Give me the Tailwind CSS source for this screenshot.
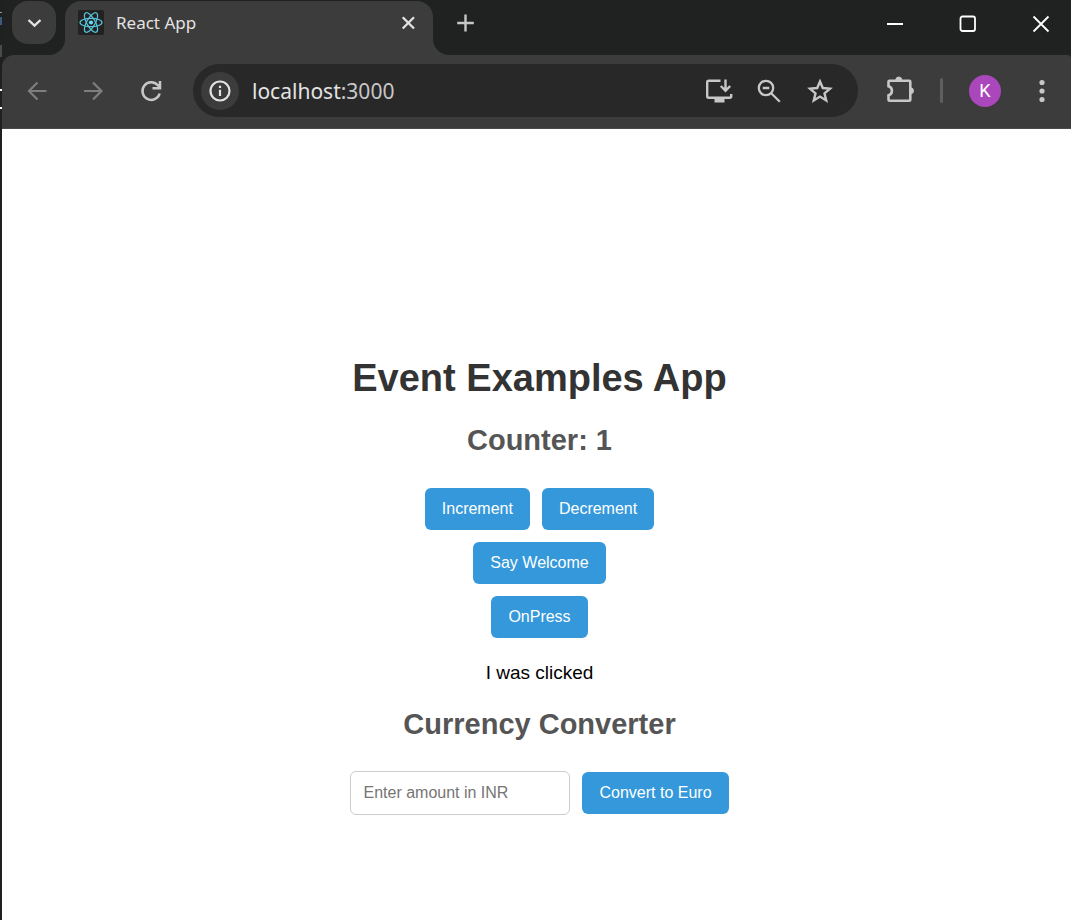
<!DOCTYPE html>
<html lang="en">
<head>
<meta charset="utf-8">
<meta name="viewport" content="width=device-width, initial-scale=1">
<title>React App</title>
<script src="https://cdn.jsdelivr.net/npm/@tailwindcss/browser@4"></script>
</head>
<body class="flex min-h-screen bg-[#202221] font-['Liberation_Sans',Arial,sans-serif]">
<div class="flex w-0.5 shrink-0 flex-col bg-[#202020]" aria-hidden="true">
  <span class="mt-3 h-px bg-[#999999]"></span>
  <span class="mt-1 h-2 bg-[#3c5a80]"></span>
  <span class="mt-5 h-3 bg-[#4a4a4a]"></span>
  <span class="mt-8 h-0.5 bg-white"></span>
  <span class="mt-4 h-0.5 bg-white"></span>
</div>
<div class="flex min-w-0 flex-1 flex-col">
  <header class="font-['Noto_Sans','Open_Sans',sans-serif]">
    <div class="flex h-[55px] items-start pl-2.5">
      <button type="button" aria-label="Search tabs" class="mt-px flex h-[43px] w-11 items-center justify-center rounded-2xl bg-[#3c3c3c]">
        <svg class="size-4" viewBox="0 0 16 16" fill="none" stroke="#e3e3e3" stroke-width="2.4"><path d="M2.500 5 8.500 10.700 14.500 5"/></svg>
      </button>
      <div class="relative mt-px ml-[9px] flex h-[54px] w-[368px] items-start rounded-t-2xl bg-[#3c3c3c] pt-[9px] pr-[17px] pl-[13px]">
        <svg class="absolute bottom-0 -left-4 size-4" viewBox="0 0 16 16" fill="#3c3c3c"><path d="M16 0v16H0A16 16 0 0 0 16 0z"/></svg>
        <svg class="absolute -right-4 bottom-0 size-4" viewBox="0 0 16 16" fill="#3c3c3c"><path d="M0 0v16h16A16 16 0 0 1 0 0z"/></svg>
        <svg class="size-[26px] shrink-0" viewBox="0 0 26 26"><rect width="26" height="25" rx="1.5" fill="#222222"/><g fill="none" stroke="#58c4dc" stroke-width="1.2"><ellipse cx="13" cy="12.5" rx="11" ry="4.2"/><ellipse cx="13" cy="12.5" rx="11" ry="4.2" transform="rotate(60 13 12.5)"/><ellipse cx="13" cy="12.5" rx="11" ry="4.2" transform="rotate(120 13 12.5)"/></g><circle cx="13" cy="12.5" r="2.1" fill="#61dafb"/></svg>
        <span class="ml-3 flex-1 text-[17px] leading-[26px] text-[#e3e3e3]">React App</span>
        <button type="button" aria-label="Close tab" class="mt-[5px] flex size-4 items-center justify-center">
          <svg class="size-4" viewBox="0 0 16 16" stroke="#e3e3e3" stroke-width="2.3"><path d="m2.700 2.200 11.300 11.300M14 2.200 2.700 13.500"/></svg>
        </button>
      </div>
      <button type="button" aria-label="New tab" class="mt-3 ml-[22px] flex size-5 items-center justify-center">
        <svg class="size-5" viewBox="0 0 20 20" stroke="#c7c7c7" stroke-width="2.4"><path d="M10.500 2.500v17M2.200 11h16.600"/></svg>
      </button>
      <div class="ml-auto flex gap-[13px]">
        <button type="button" aria-label="Minimize" class="flex h-12 w-[60px] items-center justify-center"><svg class="size-5" viewBox="0 0 20 20" stroke="#fff" stroke-width="2"><path d="M2 10h16"/></svg></button>
        <button type="button" aria-label="Maximize" class="flex h-12 w-[60px] items-center justify-center"><svg class="size-5" viewBox="0 0 20 20" fill="none" stroke="#fff" stroke-width="1.800"><rect x="2.500" y="2.500" width="14.500" height="14.500" rx="2"/></svg></button>
        <button type="button" aria-label="Close" class="flex h-12 w-[60px] items-center justify-center"><svg class="size-5" viewBox="0 0 20 20" stroke="#fff" stroke-width="1.800"><path d="m2.500 2.500 15 15M17.500 2.500l-15 15"/></svg></button>
      </div>
    </div>
    <div class="flex h-[74px] items-center rounded-tl-xl rounded-tr-sm border-b border-[#4a4a4a] bg-[#3c3c3c] pb-0.5 pl-[23px]">
      <button type="button" aria-label="Back" class="size-6"><svg class="size-6" viewBox="0 0 24 24" fill="none" stroke="#7e7e7e" stroke-width="2.200"><path d="M21.500 12H4M12.500 3.500 4 12l8.500 8.500"/></svg></button>
      <button type="button" aria-label="Forward" class="ml-8 size-6"><svg class="size-6" viewBox="0 0 24 24" fill="none" stroke="#7e7e7e" stroke-width="2.200"><path d="M3 12h17.500M12 3.500l8.500 8.500-8.500 8.500"/></svg></button>
      <button type="button" aria-label="Reload" class="ml-[34px] size-6"><svg class="size-6" viewBox="0 0 24 24" fill="none" stroke="#c7c7c7" stroke-width="2.500"><path d="M20.700 14.500a8.800 8.800 0 1 1-1.900-8.300L20.500 8M21 2v7.200h-7.500"/></svg></button>
      <div class="ml-[30px] flex h-[53px] flex-1 items-center rounded-full bg-[#282828] pr-6 pl-2">
        <button type="button" aria-label="View site information" class="flex size-[38px] shrink-0 items-center justify-center rounded-full bg-[#3c3c3c]"><svg class="size-6" viewBox="0 0 24 24" fill="none" stroke="#e3e3e3" stroke-width="2.200"><circle cx="12" cy="12" r="9.500"/><path d="M12 10.700v6.300M12 6.800v2.300"/></svg></button>
        <div class="ml-[13px] flex-1 text-[21px] leading-7 text-[#c7c7c7]"><span class="text-[#e3e3e3]">localhost</span>:3000</div>
        <button type="button" aria-label="Install app" class="size-7"><svg class="size-7" viewBox="0 0 28 28" fill="none" stroke="#c7c7c7" stroke-width="2.400"><path d="M15.500 3.700H3.700a1.500 1.500 0 0 0-1.500 1.500v14a1.500 1.500 0 0 0 1.500 1.500h21a1.500 1.500 0 0 0 1.500-1.500V17M20.500 2.500v11M15.800 9l4.700 4.700L25.200 9"/><path d="M9.500 23.500h10" stroke-width="4"/></svg></button>
        <button type="button" aria-label="Zoom" class="ml-[22px] size-7"><svg class="size-7" viewBox="0 0 28 28" fill="none" stroke="#c7c7c7" stroke-width="2.300"><circle cx="11" cy="11" r="7.200"/><path d="m16.200 16.200 8.600 8.600M7.700 11h6.600"/></svg></button>
        <button type="button" aria-label="Bookmark this tab" class="ml-[23px] size-7"><svg class="size-7" viewBox="0 0 28 28" fill="none" stroke="#c7c7c7" stroke-width="2.400"><path d="m14 4.500 2.800 6.500 7.200.6-5.500 4.800 1.700 7-6.200-3.800-6.200 3.800 1.700-7L4 11.600l7.200-.6z"/></svg></button>
      </div>
      <button type="button" aria-label="Extensions" class="ml-7 size-7"><svg class="size-7 overflow-visible" viewBox="0 0 28 28" fill="none" stroke="#c7c7c7" stroke-width="2.600"><path d="M3.500 3.800h19.800a1 1 0 0 1 1 1v18a1 1 0 0 1-1 1H3.500a1 1 0 0 1-1-1v-4.600c4.600-1.300 4.600-7.700 0-9V4.800a1 1 0 0 1 1-1z"/><path d="M9.800 3a3 3 0 0 1 6 0zM24.500 10.800a3 3 0 0 1 0 6z" fill="#c7c7c7" stroke-width="1"/></svg></button>
      <span class="ml-[26px] h-[25px] w-[3px] rounded-full bg-[#5f5f5f]"></span>
      <button type="button" aria-label="Profile K" class="ml-[26px] size-8 rounded-full bg-[#ab47bc] font-['Roboto',sans-serif] text-[18px] leading-8 text-white">K</button>
      <button type="button" aria-label="Menu" class="mr-3.5 ml-7 size-7"><svg class="size-7" viewBox="0 0 28 28" fill="#c7c7c7"><circle cx="13" cy="5.500" r="2.600"/><circle cx="13" cy="14" r="2.600"/><circle cx="13" cy="22.500" r="2.600"/></svg></button>
    </div>
  </header>
  <main class="flex flex-1 flex-col items-center justify-center bg-white pt-[153px] pb-[32px] pl-1.5 text-center">
    <div class="flex flex-col items-center">
      <h1 class="text-[38px] leading-11 font-bold text-[#333333]">Event Examples App</h1>
      <h2 class="mt-6 text-[29px] leading-8 font-bold text-[#555555]">Counter: 1</h2>
      <div class="mt-8 flex gap-3">
        <button type="button" class="rounded-md bg-[#3498db] px-[17px] py-[9px] text-base text-white">Increment</button>
        <button type="button" class="rounded-md bg-[#3498db] px-[17px] py-[9px] text-base text-white">Decrement</button>
      </div>
      <button type="button" class="mt-3 rounded-md bg-[#3498db] px-[17px] py-[9px] text-base text-white">Say Welcome</button>
      <button type="button" class="mt-3 rounded-md bg-[#3498db] px-[17px] py-[9px] text-base text-white">OnPress</button>
      <p class="mt-[23px] text-[19px] leading-6 text-black">I was clicked</p>
      <h2 class="mt-[23px] text-[29px] leading-8 font-bold text-[#555555]">Currency Converter</h2>
      <form class="mt-[31px] flex items-center gap-3">
        <input type="text" aria-label="Enter amount in INR" placeholder="Enter amount in INR" class="h-11 w-[220px] rounded-md border border-[#cccccc] px-3 text-base text-black placeholder:text-[#757575]">
        <button type="button" class="rounded-md bg-[#3498db] px-[17px] py-[9px] text-base text-white">Convert to Euro</button>
      </form>
    </div>
  </main>
</div>
</body>
</html>
